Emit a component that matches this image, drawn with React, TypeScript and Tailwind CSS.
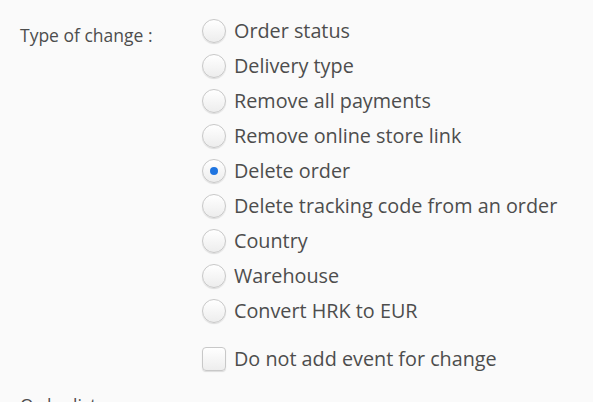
const OPTIONS = [
  "Order status",
  "Delivery type",
  "Remove all payments",
  "Remove online store link",
  "Delete order",
  "Delete tracking code from an order",
  "Country",
  "Warehouse",
  "Convert HRK to EUR",
];

function Radio({ checked }: { checked: boolean }) {
  return (
    <span className="flex h-6 w-6 shrink-0 items-center justify-center rounded-full border border-[#c8c8c8] bg-gradient-to-b from-white to-[#ededed] shadow-[0_1px_1px_rgba(0,0,0,0.12)]">
      {checked && <span className="h-2 w-2 rounded-full bg-[#1e74e0]" />}
    </span>
  );
}

export default function App() {
  const selected = 4;
  return (
    <div
      className="h-[402px] w-[593px] overflow-hidden bg-[#fafafa] text-[#4d4d4d]"
      style={{ fontFamily: '"Open Sans", "Liberation Sans", sans-serif' }}
    >
      <div className="flex pt-[13px]">
        <div className="w-[202px] shrink-0 pl-5 pt-[12px] text-[17.5px] leading-5">Type of change :</div>
        <div className="flex flex-col">
          {OPTIONS.map((o, i) => (
            <label key={o} className="flex h-[35px] items-center gap-2 text-[19.8px]">
              <Radio checked={i === selected} />
              <span>{o}</span>
            </label>
          ))}
          <label className="mt-[13px] flex h-[35px] items-center gap-2 text-[19.8px]">
            <span className="h-6 w-6 shrink-0 rounded-[4px] border border-[#c8c8c8] bg-gradient-to-b from-white to-[#ededed] shadow-[0_1px_1px_rgba(0,0,0,0.12)]" />
            <span>Do not add event for change</span>
          </label>
        </div>
      </div>
      <div className="pl-5 pt-[19px] text-[17.5px] leading-5">Order list</div>
    </div>
  );
}
